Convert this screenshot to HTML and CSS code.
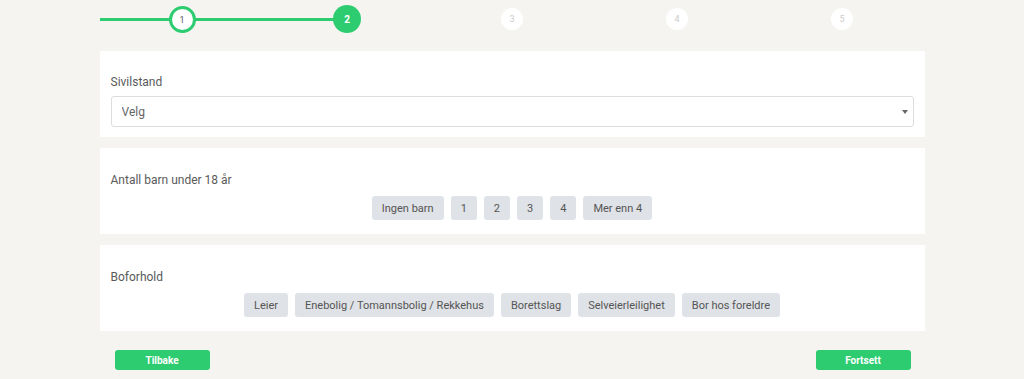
FILE: index.html
```html
<!DOCTYPE html>
<html lang="en">
<head>
  <meta charset="UTF-8">
  <meta name="viewport" content="width=device-width, initial-scale=1.0">
  <title>Søknad - steg 2</title>
  <link rel="stylesheet" href="styles.css">
</head>
<body>
  <div class="wizard">
    <ol class="steps">
      <li class="step done"><span class="dot">1</span></li>
      <li class="step active"><span class="dot">2</span></li>
      <li class="step"><span class="dot">3</span></li>
      <li class="step"><span class="dot">4</span></li>
      <li class="step"><span class="dot">5</span></li>
    </ol>

    <div class="card card-select">
      <label class="card-label" for="sivilstand">Sivilstand</label>
      <div class="select-wrap">
        <select id="sivilstand">
          <option>Velg</option>
          <option>Ugift</option>
          <option>Gift</option>
          <option>Samboer</option>
          <option>Skilt</option>
        </select>
      </div>
    </div>

    <div class="card">
      <div class="card-label">Antall barn under 18 år</div>
      <div class="choices">
        <button class="choice">Ingen barn</button>
        <button class="choice">1</button>
        <button class="choice">2</button>
        <button class="choice">3</button>
        <button class="choice">4</button>
        <button class="choice">Mer enn 4</button>
      </div>
    </div>

    <div class="card">
      <div class="card-label">Boforhold</div>
      <div class="choices">
        <button class="choice">Leier</button>
        <button class="choice">Enebolig / Tomannsbolig / Rekkehus</button>
        <button class="choice">Borettslag</button>
        <button class="choice">Selveierleilighet</button>
        <button class="choice">Bor hos foreldre</button>
      </div>
    </div>

    <div class="nav">
      <button class="nav-btn">Tilbake</button>
      <button class="nav-btn">Fortsett</button>
    </div>
  </div>
</body>
</html>
```

FILE: styles.css
```css
* {
  margin: 0;
  padding: 0;
  box-sizing: border-box;
}

body {
  font-family: Roboto, 'Liberation Sans', sans-serif;
  background-color: #f5f4f0;
  color: #5a5a5a;
}

.wizard {
  width: 825px;
  margin: 0 auto;
}

/* Stepper */
.steps {
  list-style: none;
  display: flex;
  height: 51px;
  padding-top: 5px;
}

.step {
  flex: 1;
  position: relative;
  display: flex;
  justify-content: center;
  align-items: flex-start;
}

.step.done::before,
.step.done::after,
.step.active::before {
  content: '';
  position: absolute;
  top: 13px;
  height: 3px;
  width: 50%;
  background-color: #2ecc71;
}

.step::before {
  left: 0;
}

.step::after {
  right: 0;
}

.dot {
  position: relative;
  z-index: 1;
  width: 22px;
  height: 22px;
  margin-top: 3px;
  border-radius: 50%;
  background-color: #fff;
  color: #ccc;
  font-size: 9px;
  display: flex;
  align-items: center;
  justify-content: center;
}

.step.done .dot {
  width: 27px;
  height: 27px;
  margin-top: 1px;
  border: 3px solid #2ecc71;
  color: #555;
}

.step.active .dot {
  width: 28px;
  height: 28px;
  margin-top: 0;
  background-color: #2ecc71;
  color: #fff;
  font-weight: 700;
  font-size: 10px;
}

/* Cards */
.card {
  background-color: #fff;
  padding: 24px 11px 14px;
  margin-bottom: 11px;
}

.card-select {
  padding: 23px 11px 10px;
}

.card-label {
  display: block;
  font-size: 12px;
  line-height: 16px;
  margin-bottom: 8px;
}

.card-select .card-label {
  margin-bottom: 6px;
}

.select-wrap {
  position: relative;
}

.select-wrap::after {
  content: '';
  position: absolute;
  right: 6px;
  top: 14px;
  border-left: 3px solid transparent;
  border-right: 3px solid transparent;
  border-top: 4px solid #666;
  pointer-events: none;
}

select {
  width: 100%;
  height: 31px;
  padding: 0 10px;
  border: 1px solid #ddd;
  border-radius: 3px;
  background-color: #fff;
  color: #666;
  font-family: inherit;
  font-size: 12px;
  appearance: none;
  -webkit-appearance: none;
}

.choices {
  display: flex;
  justify-content: center;
  gap: 7px;
}

.choice {
  min-width: 23px;
  height: 24px;
  padding: 0 10px;
  border: none;
  border-radius: 3px;
  background-color: #dfe2e6;
  color: #555;
  font-family: inherit;
  font-size: 11px;
  cursor: pointer;
}

/* Navigation */
.nav {
  display: flex;
  justify-content: space-between;
  padding: 8px 14px 0 15px;
}

.nav-btn {
  width: 95px;
  height: 20px;
  border: none;
  border-radius: 3px;
  background-color: #2ecc71;
  color: #fff;
  font-family: inherit;
  font-weight: 700;
  font-size: 10px;
  cursor: pointer;
}
```
